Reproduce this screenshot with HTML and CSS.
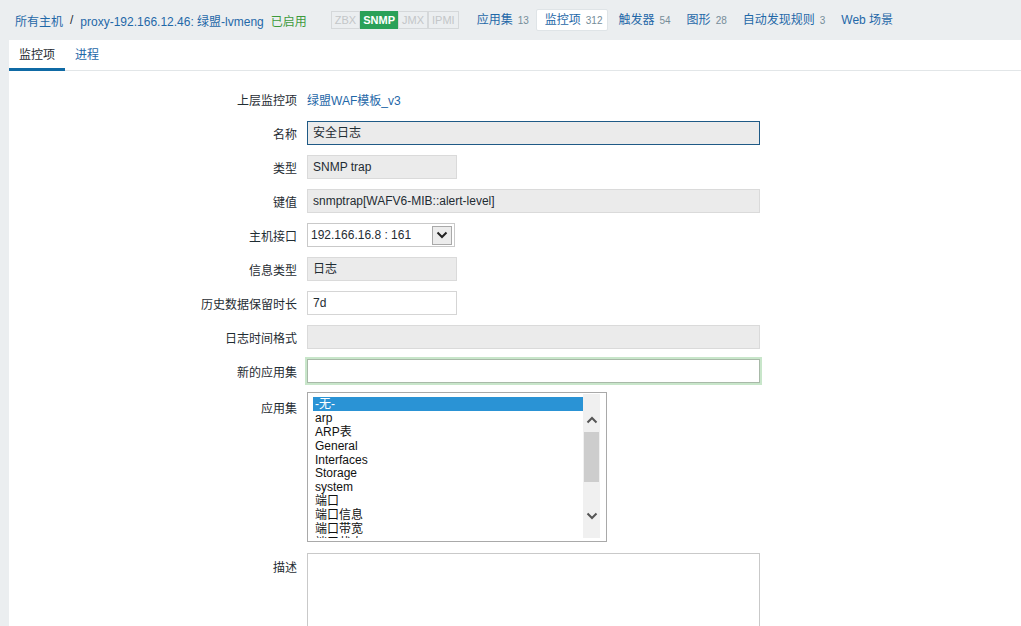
FILE: index.html
```html
<!DOCTYPE html>
<html lang="zh">
<head>
<meta charset="utf-8">
<title>监控项</title>
<link rel="stylesheet" href="styles.css">
</head>
<body>
<header class="topbar">
  <nav class="crumbs">
    <a class="link">所有主机</a>
    <span class="sep">/</span>
    <a class="link">proxy-192.166.12.46: 绿盟-lvmeng</a>
  </nav>
  <span class="status">已启用</span>
  <div class="avail">
    <span class="tag">ZBX</span><span class="tag on">SNMP</span><span class="tag">JMX</span><span class="tag">IPMI</span>
  </div>
  <ul class="hostnav">
    <li class="navitem"><a class="link">应用集</a><sup class="cnt">13</sup></li>
    <li class="navitem sel"><a class="link">监控项</a><sup class="cnt">312</sup></li>
    <li class="navitem"><a class="link">触发器</a><sup class="cnt">54</sup></li>
    <li class="navitem"><a class="link">图形</a><sup class="cnt">28</sup></li>
    <li class="navitem"><a class="link">自动发现规则</a><sup class="cnt">3</sup></li>
    <li class="navitem"><a class="link">Web 场景</a></li>
  </ul>
</header>
<main class="content">
  <div class="tabs">
    <span class="tab active">监控项</span>
    <span class="tab"><a class="link">进程</a></span>
  </div>
  <form class="form">
    <div class="row">
      <label class="lbl">上层监控项</label>
      <a class="link">绿盟WAF模板_v3</a>
    </div>
    <div class="row">
      <label class="lbl">名称</label>
      <div class="inp wide ro focus">安全日志</div>
    </div>
    <div class="row">
      <label class="lbl">类型</label>
      <div class="inp narrow ro">SNMP trap</div>
    </div>
    <div class="row">
      <label class="lbl">键值</label>
      <div class="inp wide ro">snmptrap[WAFV6-MIB::alert-level]</div>
    </div>
    <div class="row">
      <label class="lbl">主机接口</label>
      <div class="select">
        <span class="seltext">192.166.16.8 : 161</span>
        <span class="selbtn">
          <svg width="12" height="8" viewBox="0 0 12 8"><path d="M1.5 1.5 L6 6 L10.5 1.5" fill="none" stroke="#222" stroke-width="2"/></svg>
        </span>
      </div>
    </div>
    <div class="row">
      <label class="lbl">信息类型</label>
      <div class="inp narrow ro">日志</div>
    </div>
    <div class="row">
      <label class="lbl">历史数据保留时长</label>
      <div class="inp narrow">7d</div>
    </div>
    <div class="row">
      <label class="lbl">日志时间格式</label>
      <div class="inp wide ro"></div>
    </div>
    <div class="row">
      <label class="lbl">新的应用集</label>
      <div class="inp wide glow"></div>
    </div>
    <div class="row tall">
      <label class="lbl top">应用集</label>
      <div class="listbox">
        <ul class="opts">
          <li class="opt selopt">-无-</li>
          <li class="opt">arp</li>
          <li class="opt">ARP表</li>
          <li class="opt">General</li>
          <li class="opt">Interfaces</li>
          <li class="opt">Storage</li>
          <li class="opt">system</li>
          <li class="opt">端口</li>
          <li class="opt">端口信息</li>
          <li class="opt">端口带宽</li>
          <li class="opt">端口状态</li>
        </ul>
        <div class="sbar">
          <span class="sarrow up"><svg width="12" height="8" viewBox="0 0 12 8"><path d="M1.5 6.5 L6 2 L10.5 6.5" fill="none" stroke="#555" stroke-width="2"/></svg></span>
          <span class="thumb"></span>
          <span class="sarrow down"><svg width="12" height="8" viewBox="0 0 12 8"><path d="M1.5 1.5 L6 6 L10.5 1.5" fill="none" stroke="#555" stroke-width="2"/></svg></span>
        </div>
      </div>
    </div>
    <div class="row tall">
      <label class="lbl top2">描述</label>
      <div class="textarea"></div>
    </div>
  </form>
</main>
</body>
</html>
```

FILE: styles.css
```css
* { box-sizing: border-box; }
html, body { margin: 0; padding: 0; overflow: hidden; }
body {
  background: #ebeef0;
  font-family: "Liberation Sans", Arial, "Noto Sans CJK SC", sans-serif;
  font-size: 12px;
  color: #1f2c33;
  height: 626px;
}
.link { color: #1f68a8; text-decoration: none; }

.topbar {
  height: 40px;
  display: flex;
  align-items: center;
  padding-left: 15px;
}
.crumbs { display: flex; align-items: center; }
.sep { margin: 0 7px; color: #1f2c33; }
.status { color: #3d9a3d; margin-left: 7px; }
.avail { display: flex; margin-left: 24px; height: 18px; }
.tag {
  border: 1px solid #d5d8da;
  color: #c3c6c8;
  font-size: 11px;
  line-height: 16px;
  padding: 0 3px;
  background: #ebeef0;
}
.tag.on {
  background: #2aa158;
  border-color: #2aa158;
  color: #fff;
  font-weight: bold;
  padding: 0 2px;
}
.hostnav {
  list-style: none;
  display: flex;
  margin: 0 0 0 9px;
  padding: 0;
}
.navitem {
  padding: 0 5px 0 8px;
  margin-right: 1px;
  height: 22px;
  line-height: 20px;
  border: 1px solid transparent;
  border-radius: 2px;
}
.navitem.sel { background: #fff; border-color: #dfe4e7; }
.cnt { font-size: 10px; color: #768d99; vertical-align: baseline; margin-left: 5px; }

.content {
  margin-left: 9px;
  background: #fff;
  height: 586px;
  overflow: hidden;
}
.tabs {
  height: 31px;
  display: flex;
  border-bottom: 1px solid #e2e6e8;
}
.tab {
  padding: 0 10px;
  line-height: 30px;
  height: 31px;
  white-space: nowrap;
}
.tab.active {
  color: #1f2c33;
  border-bottom: 3px solid #0f6aa5;
}
.form { padding-top: 16px; }
.row {
  display: flex;
  align-items: center;
  height: 24px;
  margin-bottom: 10px;
}
.row.tall { height: auto; align-items: flex-start; }
.lbl {
  width: 298px;
  text-align: right;
  padding-right: 10px;
  color: #1f2c33;
}
.lbl.top { padding-top: 6px; }
.lbl.top2 { padding-top: 6px; }
.inp {
  height: 24px;
  border: 1px solid #d5d5d5;
  background: #fff;
  padding: 0 5px;
  line-height: 22px;
  color: #1f2c33;
}
.inp.ro { background: #ebebeb; border-color: #dadada; }
.inp.wide { width: 453px; }
.inp.narrow { width: 150px; }
.inp.focus { border-color: #1f5a86; }
.inp.glow {
  border-color: #a8b9a8;
  box-shadow: 0 0 0 2px #c8e6ca;
}
.select {
  width: 148px;
  height: 24px;
  border: 1px solid #c9c9c9;
  display: flex;
  align-items: center;
  justify-content: space-between;
  padding: 0 2px 0 3px;
}
.selbtn {
  width: 20px;
  height: 19px;
  border: 1px solid #a9a9a9;
  background: #ececec;
  display: flex;
  align-items: center;
  justify-content: center;
}
.listbox {
  width: 300px;
  height: 150px;
  border: 1px solid #a9a9a9;
  display: flex;
  padding: 1px 6px 3px 5px;
  margin-top: -1px;
}
.opts {
  list-style: none;
  margin: 0;
  padding: 3px 0 0 0;
  width: 270px;
  overflow: hidden;
  height: 144px;
}
.opt {
  height: 13.9px;
  line-height: 14px;
  padding-left: 2px;
  color: #111;
  white-space: nowrap;
}
.opt.selopt { background: #2a93d5; color: #fff; }
.sbar {
  width: 17px;
  background: #f0f0f0;
  display: flex;
  flex-direction: column;
  align-items: center;
  padding-top: 19px;
}
.sarrow { height: 14px; display: flex; align-items: center; justify-content: center; }
.thumb {
  width: 15px;
  height: 50px;
  background: #cdcdcd;
  margin-top: 5px;
}
.sarrow.down { margin-top: 27px; }
.textarea {
  width: 453px;
  height: 120px;
  border: 1px solid #c9c9c9;
  margin-top: 1px;
}
```
